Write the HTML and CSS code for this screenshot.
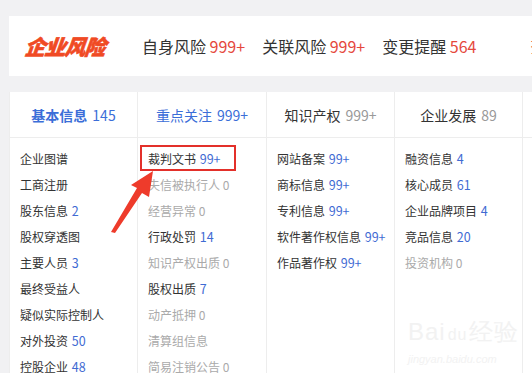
FILE: index.html
```html
<!DOCTYPE html>
<html lang="zh">
<head>
<meta charset="utf-8">
<link rel="stylesheet" href="styles.css">
</head>
<body>
<div class="page">
  <div class="risk-bar">
    <div class="logo">企业风险</div>
    <div class="sep"></div>
    <div class="risk">自身风险 <span class="num">999+</span></div>
    <div class="risk">关联风险 <span class="num">999+</span></div>
    <div class="risk">变更提醒 <span class="num">564</span></div>
    <div class="risk more">查看</div>
  </div>

  <div class="cats">
    <div class="col first">
      <div class="head active">基本信息 <span class="cnt">145</span></div>
      <ul class="list">
        <li>企业图谱</li>
        <li>工商注册</li>
        <li>股东信息 <span class="c">2</span></li>
        <li>股权穿透图</li>
        <li>主要人员 <span class="c">3</span></li>
        <li>最终受益人</li>
        <li>疑似实际控制人</li>
        <li>对外投资 <span class="c">50</span></li>
        <li>控股企业 <span class="c">48</span></li>
      </ul>
    </div>
    <div class="col second">
      <div class="head blue">重点关注 <span class="cnt">999+</span></div>
      <ul class="list">
        <li><span class="mark">裁判文书 <span class="c">99+</span></span></li>
        <li class="zero">失信被执行人 0</li>
        <li class="zero">经营异常 0</li>
        <li>行政处罚 <span class="c">14</span></li>
        <li class="zero">知识产权出质 0</li>
        <li>股权出质 <span class="c">7</span></li>
        <li class="zero">动产抵押 0</li>
        <li class="zero">清算组信息</li>
        <li class="zero">简易注销公告 0</li>
      </ul>
    </div>
    <div class="col">
      <div class="head">知识产权 <span class="cnt gray">999+</span></div>
      <ul class="list">
        <li>网站备案 <span class="c">99+</span></li>
        <li>商标信息 <span class="c">99+</span></li>
        <li>专利信息 <span class="c">99+</span></li>
        <li>软件著作权信息 <span class="c">99+</span></li>
        <li>作品著作权 <span class="c">99+</span></li>
      </ul>
    </div>
    <div class="col">
      <div class="head">企业发展 <span class="cnt gray">89</span></div>
      <ul class="list">
        <li>融资信息 <span class="c">4</span></li>
        <li>核心成员 <span class="c">61</span></li>
        <li>企业品牌项目 <span class="c">4</span></li>
        <li>竞品信息 <span class="c">20</span></li>
        <li class="zero">投资机构 0</li>
      </ul>
    </div>
    <div class="col last">
      <div class="head"></div>
      <ul class="list faint">
        <li>招聘信息</li>
        <li>税务信用</li>
        <li>资质证书</li>
        <li>招投标</li>
        <li>购地信息</li>
        <li>抽查检查</li>
        <li>进出口信用</li>
        <li>双随机抽查</li>
        <li>电信许可</li>
      </ul>
    </div>
  </div>

  <svg class="arrow" width="532" height="373" viewBox="0 0 532 373">
    <polygon points="153,171 131,185 137,188 111,232 115,233 142,193 149,197" fill="#ee3b2b"/>
  </svg>

  <div class="watermark">
    <div class="wm-logo">Bai<span class="du">du</span>经验</div>
    <div class="wm-url">jingyan.baidu.com</div>
  </div>
</div>
</body>
</html>
```

FILE: styles.css
```css
* { box-sizing: border-box; }
html, body {
  margin: 0;
  padding: 0;
  background: #f1f1f3;
}
body {
  font-family: "Noto Sans CJK SC", "Noto Sans", sans-serif;
  color: #333;
}
.page {
  position: relative;
  width: 532px;
  height: 373px;
  overflow: hidden;
  padding: 16px 0 0 9px;
}
.risk-bar {
  display: flex;
  align-items: center;
  height: 60px;
  width: 540px;
  background: #fff;
  padding-left: 16px;
  white-space: nowrap;
}
.logo {
  font-size: 21px;
  font-weight: 900;
  font-style: italic;
  color: #f04a24;
  letter-spacing: -1px;
  transform: skewX(-6deg);
  -webkit-text-stroke: 0.6px #f04a24;
}
.sep {
  width: 1px;
  height: 30px;
  background: #ececec;
  margin: 0 17px 0 18px;
}
.risk {
  font-size: 16px;
  color: #333;
  margin-right: 17px;
}
.risk:nth-child(3) { margin-left: 2px; }
.risk .num { color: #e5483c; }
.risk.more { color: #e5483c; margin-left: 37px; }

.cats {
  margin-top: 16px;
  display: flex;
  width: 560px;
  height: 300px;
  background: #fff;
}
.col {
  width: 128px;
  flex: none;
  border-left: 1px solid #ededed;
}
.col.second { width: 129px; }
.head {
  height: 46px;
  border-bottom: 1px solid #ededed;
  display: flex;
  align-items: center;
  justify-content: center;
  font-size: 14px;
  color: #333;
  white-space: nowrap;
}
.head .cnt { margin-left: 5px; }
.head .cnt.gray { color: #999; }
.head.active { color: #3b6ed8; font-weight: 700; }
.head.active .cnt { font-weight: 400; }
.head.blue { color: #3b6ed8; }
.list {
  list-style: none;
  margin: 0;
  padding: 8px 0 0 10px;
  font-size: 12px;
  line-height: 26px;
  white-space: nowrap;
}
.list .c { color: #3f6bd3; margin-left: 1px; font-size: 12.5px; }
.list .zero { color: #aaa; }
.list.faint { color: #f5e6bd; }
.mark {
  position: relative;
  display: inline-block;
}
.mark::after {
  content: "";
  position: absolute;
  left: -8px;
  right: -15px;
  top: -1px;
  bottom: 1px;
  border: 2px solid #e3302a;
}
.arrow {
  position: absolute;
  left: 0;
  top: 0;
  pointer-events: none;
}
.watermark {
  position: absolute;
  left: 408px;
  top: 318px;
  color: #f2f2f2;
  font-family: "Liberation Sans", sans-serif;
  pointer-events: none;
}
.wm-logo {
  font-size: 24px;
  line-height: 28px;
  letter-spacing: 1px;
}
.wm-logo .du {
  font-size: 16px;
  margin: 0 2px;
}
.wm-url {
  font-size: 11px;
  font-style: italic;
  margin-top: 4px;
}
```
